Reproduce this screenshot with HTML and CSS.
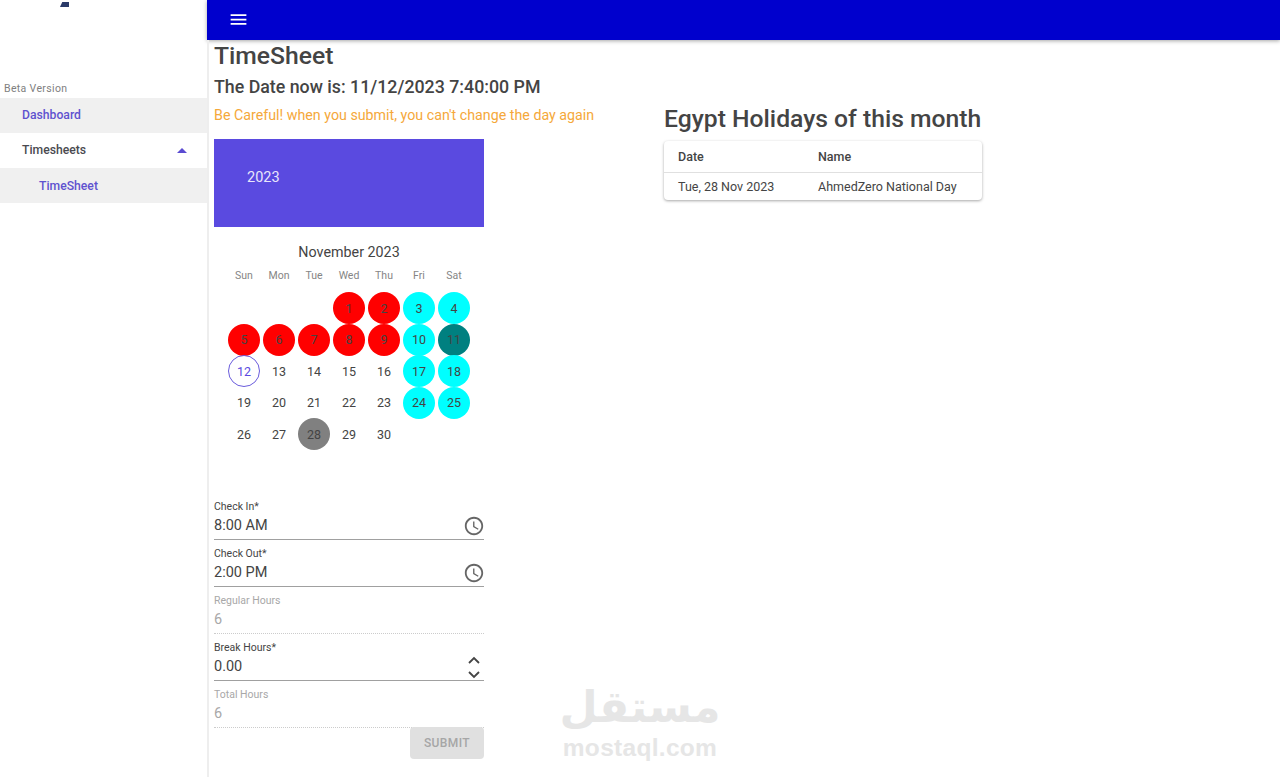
FILE: index.html
```html
<!DOCTYPE html>
<html lang="en">
<head>
    <meta charset="UTF-8">
    <title>TimeSheet</title>
    <link rel="stylesheet" href="styles.css">
</head>
<body>
    <div class="layout">
        <aside class="sidebar">
            <div class="logo"><span class="logo-mark"></span></div>
            <div class="beta">Beta Version</div>
            <nav>
                <a class="nav-item active">Dashboard</a>
                <a class="nav-item parent">Timesheets <span class="caret"></span></a>
                <a class="nav-item sub active">TimeSheet</a>
            </nav>
        </aside>
        <div class="content">
            <header class="appbar">
                <svg class="menu-icon" width="21" height="21" viewBox="0 0 24 24"><path fill="#fff" d="M3 18h18v-2H3v2zm0-5h18v-2H3v2zm0-7v2h18V6H3z"/></svg>
            </header>
            <main class="page">
                <section class="left">
                    <h1>TimeSheet</h1>
                    <h2>The Date now is: 11/12/2023 7:40:00 PM</h2>
                    <p class="warning">Be Careful! when you submit, you can't change the day again</p>
                    <div class="picker">
                        <div class="picker-head">2023</div>
                        <div class="month">November 2023</div>
                        <div class="week">
                            <span>Sun</span><span>Mon</span><span>Tue</span><span>Wed</span><span>Thu</span><span>Fri</span><span>Sat</span>
                        </div>
                        <div class="days">
                            <span></span><span></span><span></span>
                            <span class="day red">1</span><span class="day red">2</span><span class="day cyan">3</span><span class="day cyan">4</span>
                            <span class="day red">5</span><span class="day red">6</span><span class="day red">7</span><span class="day red">8</span><span class="day red">9</span><span class="day cyan">10</span><span class="day teal">11</span>
                            <span class="day today">12</span><span class="day">13</span><span class="day">14</span><span class="day">15</span><span class="day">16</span><span class="day cyan">17</span><span class="day cyan">18</span>
                            <span class="day">19</span><span class="day">20</span><span class="day">21</span><span class="day">22</span><span class="day">23</span><span class="day cyan">24</span><span class="day cyan">25</span>
                            <span class="day">26</span><span class="day">27</span><span class="day gray">28</span><span class="day">29</span><span class="day">30</span>
                        </div>
                    </div>
                    <form class="form">
                        <div class="field">
                            <label>Check In*</label>
                            <div class="value">8:00 AM
                                <svg class="clock" width="22" height="22" viewBox="0 0 24 24"><path fill="#666" d="M11.99 2C6.47 2 2 6.48 2 12s4.47 10 9.99 10C17.52 22 22 17.52 22 12S17.52 2 11.99 2zM12 20c-4.42 0-8-3.58-8-8s3.58-8 8-8 8 3.58 8 8-3.58 8-8 8zm.5-13H11v6l5.25 3.15.75-1.23-4.5-2.67z"/></svg>
                            </div>
                        </div>
                        <div class="field">
                            <label>Check Out*</label>
                            <div class="value">2:00 PM
                                <svg class="clock" width="22" height="22" viewBox="0 0 24 24"><path fill="#666" d="M11.99 2C6.47 2 2 6.48 2 12s4.47 10 9.99 10C17.52 22 22 17.52 22 12S17.52 2 11.99 2zM12 20c-4.42 0-8-3.58-8-8s3.58-8 8-8 8 3.58 8 8-3.58 8-8 8zm.5-13H11v6l5.25 3.15.75-1.23-4.5-2.67z"/></svg>
                            </div>
                        </div>
                        <div class="field disabled">
                            <label>Regular Hours</label>
                            <div class="value">6</div>
                        </div>
                        <div class="field">
                            <label>Break Hours*</label>
                            <div class="value">0.00
                                <svg class="spin" width="14" height="24" viewBox="0 0 14 24"><path fill="none" stroke="#444" stroke-width="1.8" d="M2 8l5-5 5 5M2 17l5 5 5-5"/></svg>
                            </div>
                        </div>
                        <div class="field disabled">
                            <label>Total Hours</label>
                            <div class="value">6</div>
                        </div>
                        <div class="actions">
                            <button type="button" class="submit">SUBMIT</button>
                        </div>
                    </form>
                </section>
                <section class="right">
                    <h3>Egypt Holidays of this month</h3>
                    <div class="card">
                        <table>
                            <thead>
                                <tr><th>Date</th><th>Name</th></tr>
                            </thead>
                            <tbody>
                                <tr><td>Tue, 28 Nov 2023</td><td>AhmedZero National Day</td></tr>
                            </tbody>
                        </table>
                    </div>
                </section>
            </main>
        </div>
    </div>
    <div class="watermark">
        <div class="wm-ar" lang="ar" dir="rtl">مستقل</div>
        <div class="wm-en">mostaql.com</div>
    </div>
</body>
</html>
```

FILE: styles.css
```css
* {
    box-sizing: border-box;
    margin: 0;
    padding: 0;
}

body {
    font-family: Roboto, sans-serif;
    background-color: #fff;
    color: #444;
    height: 777px;
    overflow: hidden;
}

.layout {
    display: flex;
    height: 777px;
}

.sidebar {
    width: 207px;
    flex-shrink: 0;
    background-color: #fff;
}

.logo {
    height: 82px;
    padding: 2px 0 0 60px;
}

.logo-mark {
    display: block;
    width: 9px;
    height: 5px;
    background-color: #2a3a68;
    clip-path: polygon(25% 0, 100% 0, 100% 100%, 0 100%);
}

.beta {
    height: 15.5px;
    padding-left: 4px;
    font-size: 10.5px;
    line-height: 13px;
    letter-spacing: 0.35px;
    color: #808080;
}

.nav-item {
    display: flex;
    align-items: center;
    justify-content: space-between;
    height: 35.3px;
    padding: 0 20px 0 22px;
    font-size: 12.2px;
    font-weight: 500;
    color: #4a4a50;
}

.nav-item.active {
    background-color: #f0f0f0;
    color: #5f52cf;
}

.nav-item.sub {
    padding-left: 39px;
}

.caret {
    width: 0;
    height: 0;
    border-left: 5px solid transparent;
    border-right: 5px solid transparent;
    border-bottom: 5px solid #5a4bd1;
}

.content {
    flex: 1;
    min-width: 0;
}

.appbar {
    display: flex;
    align-items: center;
    height: 40px;
    padding: 0 0 1px 21px;
    background-color: #0000cd;
    box-shadow: 0 1px 4px rgba(0, 0, 0, 0.35);
}

.page {
    display: flex;
    height: 737px;
    padding-left: 5px;
    border-left: 2px solid #eeeeee;
}

.left {
    width: 450px;
}

h1 {
    margin-top: 0.5px;
    font-size: 24.7px;
    font-weight: 500;
    line-height: 30px;
}

h2 {
    margin-top: 3.5px;
    font-size: 17.8px;
    font-weight: 500;
    line-height: 26px;
}

.warning {
    margin-top: 5px;
    font-size: 14.25px;
    line-height: 20px;
    color: #f5a83a;
}

.picker {
    width: 270px;
    margin-top: 14px;
}

.picker-head {
    height: 88px;
    padding: 29px 0 0 33px;
    background-color: #5a4ae0;
    color: #e8e6fb;
    font-size: 14.5px;
    line-height: 19px;
}

.month {
    margin-top: 14.5px;
    text-align: center;
    font-size: 14.3px;
    line-height: 20px;
}

.week {
    display: grid;
    grid-template-columns: repeat(7, 35px);
    padding-left: 12.5px;
    margin-top: 6.5px;
    font-size: 10.5px;
    line-height: 16px;
    color: #858585;
    text-align: center;
}

.days {
    display: grid;
    grid-template-columns: repeat(7, 35px);
    grid-auto-rows: 31.5px;
    padding-left: 12.5px;
    margin-top: 8px;
    font-size: 12.5px;
}

.day {
    display: flex;
    align-items: center;
    justify-content: center;
    width: 32px;
    height: 32px;
    margin-left: 1.5px;
    border-radius: 50%;
}

.red {
    background-color: #ff0000;
}

.cyan {
    background-color: #00ffff;
}

.teal {
    background-color: #008080;
}

.gray {
    background-color: #808080;
}

.today {
    border: 1px solid #6a5cdc;
    color: #5a4ae0;
}

.form {
    width: 270px;
    margin-top: 43px;
}

.field {
    height: 47px;
    border-bottom: 1px solid #a0a0a0;
    display: flex;
    flex-direction: column;
}

.field label {
    font-size: 10.5px;
    line-height: 14px;
    margin-top: 7px;
}

.value {
    display: flex;
    align-items: center;
    justify-content: space-between;
    height: 24px;
    font-size: 14.5px;
}

.clock {
    margin-right: -1px;
}

.spin {
    margin-right: 3px;
    margin-top: 1px;
}

.disabled {
    border-bottom: 1px dotted #ccc;
    color: #a8a8a8;
}

.actions {
    display: flex;
    justify-content: flex-end;
    margin-top: -1px;
}

.submit {
    width: 74px;
    height: 32px;
    border: none;
    border-radius: 4px;
    background-color: #e0e0e0;
    color: #a6a6a6;
    font-family: Roboto, sans-serif;
    font-size: 12px;
    font-weight: 500;
    letter-spacing: 0.4px;
}

.right {
    width: 318px;
}

h3 {
    margin-top: 64px;
    font-size: 24.7px;
    font-weight: 500;
    line-height: 30px;
    white-space: nowrap;
}

.card {
    margin-top: 7px;
    border-radius: 4px;
    box-shadow: 0 1px 3px rgba(0, 0, 0, 0.35);
}

table {
    width: 100%;
    border-collapse: collapse;
    table-layout: fixed;
    font-size: 12.5px;
    text-align: left;
}

th {
    height: 31px;
    padding: 0 0 0 14px;
    font-weight: 500;
    border-bottom: 1px solid #e0e0e0;
}

td {
    height: 28px;
    padding: 0 0 0 14px;
}

th:first-child,
td:first-child {
    width: 140px;
}

/* site stamp over the page */
.watermark {
    position: absolute;
    left: 540px;
    top: 680px;
    width: 200px;
    text-align: center;
    color: #e6e6e6;
    font-weight: 700;
}

.wm-ar {
    font-family: "DejaVu Sans", sans-serif;
    font-size: 44px;
    line-height: 54px;
}

.wm-en {
    font-family: "Liberation Sans", sans-serif;
    font-size: 24.5px;
    line-height: 28px;
    letter-spacing: 0.3px;
}
```
